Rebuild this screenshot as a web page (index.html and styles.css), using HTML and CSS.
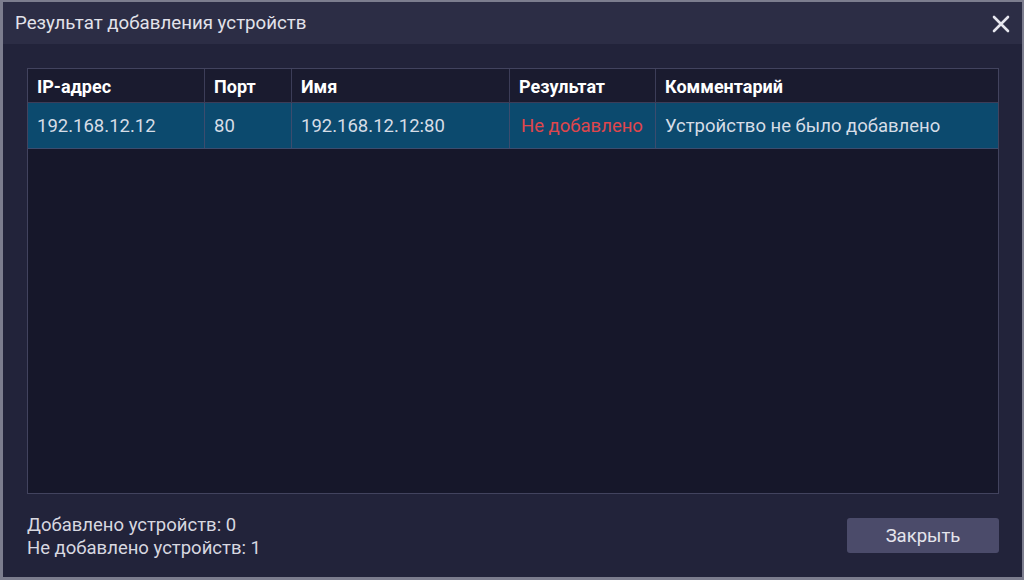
FILE: index.html
```html
<!DOCTYPE html>
<html lang="ru">
<head>
  <meta charset="UTF-8" />
  <title>Результат добавления устройств</title>
  <link rel="stylesheet" href="styles.css">
</head>
<body>
  <div class="dialog">
    <div class="titlebar">
      <span class="title">Результат добавления устройств</span>
      <svg class="close" width="18" height="18" viewBox="0 0 18 18">
        <path d="M2 2 L16 16 M16 2 L2 16" stroke="#e6e6ee" stroke-width="2.6" stroke-linecap="round" />
      </svg>
    </div>

    <div class="content">
      <div class="table-box">
        <table class="results">
          <thead>
            <tr>
              <th class="c-ip">IP-адрес</th>
              <th class="c-port">Порт</th>
              <th class="c-name">Имя</th>
              <th class="c-res">Результат</th>
              <th class="c-comm">Комментарий</th>
            </tr>
          </thead>
          <tbody>
            <tr class="selected">
              <td>192.168.12.12</td>
              <td>80</td>
              <td>192.168.12.12:80</td>
              <td class="fail">Не добавлено</td>
              <td>Устройство не было добавлено</td>
            </tr>
          </tbody>
        </table>
      </div>

      <div class="footer">
        <div class="summary">
          <div>Добавлено устройств: 0</div>
          <div>Не добавлено устройств: 1</div>
        </div>
        <button class="close-btn">Закрыть</button>
      </div>
    </div>
  </div>
</body>
</html>
```

FILE: styles.css
```css
html, body {
  margin: 0;
  padding: 0;
  background: #22233a;
}

body {
  font-family: Roboto, "Noto Sans", Arial, sans-serif;
  color: #d8d8e0;
}

.dialog {
  width: 1024px;
  height: 580px;
  box-sizing: border-box;
  border: 2px solid #7c7d8e;
  border-left-width: 3px;
  border-bottom-width: 3px;
  background: #22233a;
  display: flex;
  flex-direction: column;
}

.titlebar {
  height: 42px;
  background: #2c2d45;
  display: flex;
  align-items: center;
  justify-content: space-between;
  padding: 0 12px 0 12px;
  flex-shrink: 0;
}

.title {
  font-size: 18.7px;
  color: #e2e2ea;
}

.close {
  display: block;
  margin-top: 2px;
}

.content {
  flex: 1;
  display: flex;
  flex-direction: column;
  padding: 24px 23px 0 24px;
}

.table-box {
  height: 426px;
  box-sizing: border-box;
  border: 1px solid #42435e;
  background: #16172a;
}

.results {
  width: 100%;
  border-collapse: collapse;
  font-size: 18.5px;
}

.results th {
  height: 32px;
  text-align: left;
  font-size: 18px;
  font-weight: bold;
  color: #ffffff;
  background: #1a1b2f;
  padding: 1px 9px 0;
  border-right: 1px solid #3c3d58;
  border-bottom: 1px solid #3c3d58;
}

.results th:last-child,
.results td:last-child {
  border-right: none;
}

.results td {
  height: 45px;
  padding: 0 9px;
  color: #d6dde6;
  border-right: 1px solid #3c4c6e;
  border-bottom: 1px solid #3c4c6e;
}

.results tr.selected td {
  background: #0c4a6e;
}

.results td.fail {
  color: #e0464c;
  padding-left: 11px;
}

.c-ip { width: 158px; }
.c-port { width: 68px; }
.c-name { width: 199px; }
.c-res { width: 127px; }

.footer {
  display: flex;
  justify-content: space-between;
  align-items: flex-start;
  padding-top: 20px;
}

.summary {
  font-size: 18.5px;
  line-height: 23px;
  color: #d8d8e0;
}

.close-btn {
  width: 152px;
  height: 35px;
  border: none;
  border-radius: 3px;
  background: #4b4b6a;
  color: #e4e4ec;
  font-family: inherit;
  font-size: 18.5px;
  margin-top: 4px;
}
```
